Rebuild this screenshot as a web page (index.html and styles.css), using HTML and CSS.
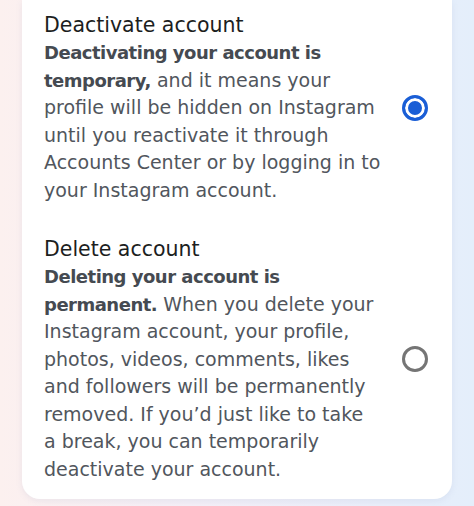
FILE: index.html
```html
<!DOCTYPE html>
<html lang="en">
<head>
    <meta charset="UTF-8">
    <meta name="viewport" content="width=device-width, initial-scale=1.0">
    <title>Deactivate or delete account</title>
    <link rel="stylesheet" href="styles.css">
</head>
<body>
    <div class="card">
        <!-- Option 1: Deactivate -->
        <label class="option">
            <div class="option-text">
                <div class="option-title">Deactivate account</div>
                <p class="option-desc"><strong>Deactivating your account is<br>temporary,</strong> and it means your<br>profile will be hidden on Instagram<br>until you reactivate it through<br>Accounts Center or by logging in to<br>your Instagram account.</p>
            </div>
            <span class="radio checked"></span>
        </label>

        <!-- Option 2: Delete -->
        <label class="option">
            <div class="option-text">
                <div class="option-title">Delete account</div>
                <p class="option-desc"><strong>Deleting your account is<br>permanent.</strong> When you delete your<br>Instagram account, your profile,<br>photos, videos, comments, likes<br>and followers will be permanently<br>removed. If you’d just like to take<br>a break, you can temporarily<br>deactivate your account.</p>
            </div>
            <span class="radio"></span>
        </label>
    </div>
</body>
</html>
```

FILE: styles.css
```css
body {
    margin: 0;
    height: 506px;
    overflow: hidden;
    font-family: 'DejaVu Sans', 'Noto Sans', sans-serif;
    background: linear-gradient(90deg, #fcf0ef 0%, #f4eff7 40%, #e9eefa 80%, #e4eefb 100%);
}
.card {
    width: 384px;
    margin-left: 22px;
    padding: 11px 24px 16px 22px;
    background: #fff;
    border-radius: 0 0 18px 18px;
    box-shadow: 0 2px 6px rgba(120, 140, 180, 0.12);
}
.option {
    display: flex;
    align-items: center;
    justify-content: space-between;
}
.option + .option {
    margin-top: 31px;
}
.option-text {
    width: 350px;
    white-space: nowrap;
}
.option-title {
    font-size: 20.5px;
    line-height: 28px;
    color: #1c1e21;
}
.option-desc {
    margin: 0;
    font-size: 19px;
    line-height: 27.5px;
    color: #51565d;
}
.option-desc strong {
    font-size: 18px;
    font-weight: 700;
    letter-spacing: -0.5px;
    color: #454a51;
}
.radio {
    width: 20px;
    height: 20px;
    border: 3px solid #757575;
    border-radius: 50%;
    flex-shrink: 0;
    box-sizing: content-box;
}
.radio.checked {
    border-color: #1a5ed6;
    background: #1a5ed6;
    box-shadow: inset 0 0 0 3px #fff;
}
```
